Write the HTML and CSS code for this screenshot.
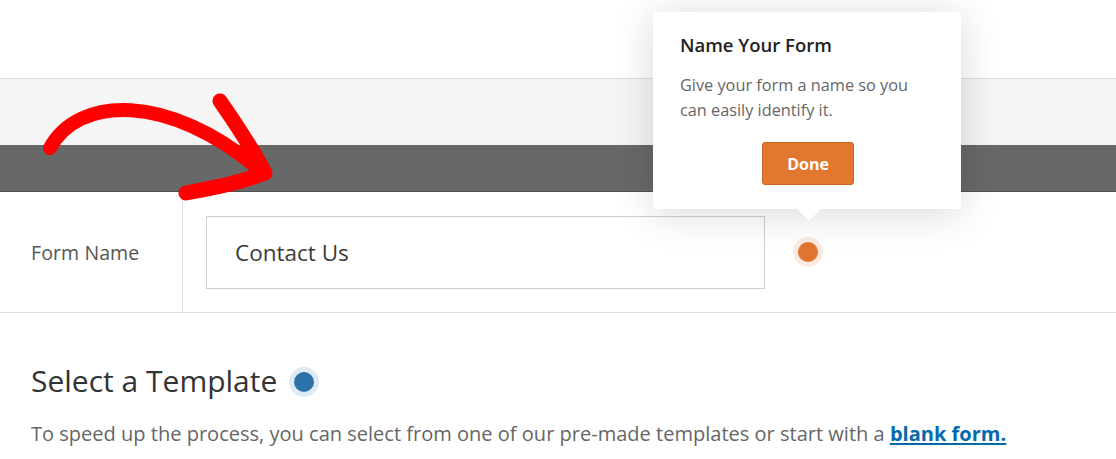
FILE: index.html
```html
<!DOCTYPE html>
<html>
<head>
<meta charset="utf-8">
<link rel="stylesheet" href="styles.css">
</head>
<body>
<div class="page">
  <div class="topbar"></div>
  <div class="toolbar"></div>
  <div class="darkbar"></div>
  <div class="name-row">
    <div class="name-label">Form Name</div>
    <div class="name-field">
      <div class="name-input">Contact Us</div>
      <span class="dot dot-orange"></span>
    </div>
  </div>
  <div class="templates">
    <h2 class="templates-title">Select a Template <span class="dot dot-blue"></span></h2>
    <p class="templates-text">To speed up the process, you can select from one of our pre-made templates or start with a <a class="blank-link" href="#">blank form.</a></p>
  </div>

  <svg class="arrow" width="300" height="220" viewBox="0 0 300 220">
    <path d="M50,148 C78,96 168,92 260,170" fill="none" stroke="#ff0000" stroke-width="14" stroke-linecap="round"/>
    <path d="M220,101 C236,124 252,148 265,173 C236,184 212,188 186,193" fill="none" stroke="#ff0000" stroke-width="15" stroke-linecap="round" stroke-linejoin="round"/>
  </svg>

  <div class="tooltip">
    <div class="tooltip-title">Name Your Form</div>
    <div class="tooltip-text">Give your form a name so you can easily identify it.</div>
    <div class="tooltip-actions"><button class="done-btn">Done</button></div>
  </div>
</div>
</body>
</html>
```

FILE: styles.css
```css
html, body {
  margin: 0;
  padding: 0;
  background: #fff;
}
.page {
  position: relative;
  width: 1116px;
  height: 459px;
  overflow: hidden;
  font-family: "Open Sans", "Noto Sans", sans-serif;
}
.topbar {
  height: 78px;
  border-bottom: 1px solid #dddddd;
}
.toolbar {
  height: 66px;
  background: #f5f5f5;
}
.darkbar {
  height: 46px;
  background: #686868;
  border-bottom: 1px solid #505050;
}
.name-row {
  display: flex;
  height: 120px;
  border-bottom: 1px solid #dddddd;
}
.name-label {
  width: 151px;
  padding-left: 31px;
  border-right: 1px solid #dddddd;
  display: flex;
  align-items: center;
  font-size: 19.5px;
  color: #555;
  letter-spacing: 0.1px;
}
.name-field {
  display: flex;
  align-items: center;
  padding-left: 23px;
}
.name-input {
  box-sizing: border-box;
  width: 559px;
  height: 73px;
  border: 1px solid #cfcfcf;
  padding-left: 28px;
  display: flex;
  align-items: center;
  font-size: 22.5px;
  color: #3a3a3a;
}
.dot {
  display: inline-block;
  width: 20px;
  height: 20px;
  border-radius: 50%;
}
.dot-orange {
  margin-left: 33px;
  background: #df7530;
  box-shadow: 0 0 0 5px rgba(223, 117, 48, 0.15);
}
.dot-blue {
  background: #2c72a6;
  box-shadow: 0 0 0 5px rgba(44, 114, 166, 0.15);
  vertical-align: 0px;
  margin-left: 9px;
}
.templates {
  padding: 0 31px;
}
.templates-title {
  margin: 48px 0 0;
  font-size: 30px;
  font-weight: 400;
  color: #333;
  line-height: 40px;
}
.templates-text {
  margin: 19px 0 0;
  font-size: 20.05px;
  color: #666;
  line-height: 28px;
  white-space: nowrap;
}
.blank-link {
  color: #036aab;
  font-weight: 700;
  text-decoration: underline;
}
.arrow {
  position: absolute;
  left: 0;
  top: 0;
}
.tooltip {
  position: absolute;
  left: 653px;
  top: 12px;
  width: 308px;
  height: 197px;
  box-sizing: border-box;
  padding: 20px 27px 0;
  background: #fff;
  border-radius: 4px;
  box-shadow: 0 4px 40px rgba(0, 0, 0, 0.16);
}
.tooltip::after {
  content: "";
  position: absolute;
  left: 144px;
  bottom: -12px;
  border-left: 12px solid transparent;
  border-right: 12px solid transparent;
  border-top: 12px solid #fff;
}
.tooltip-title {
  font-size: 18.5px;
  font-weight: 600;
  color: #222;
  line-height: 26px;
}
.tooltip-text {
  margin-top: 15px;
  font-size: 16.3px;
  color: #666;
  line-height: 25px;
  width: 240px;
}
.tooltip-actions {
  display: flex;
  justify-content: center;
  margin-top: 19px;
}
.done-btn {
  width: 92px;
  height: 43px;
  background: #e27730;
  border: 1px solid #cd6622;
  border-radius: 3px;
  color: #fff;
  font-family: "Open Sans", "Noto Sans", sans-serif;
  font-size: 16px;
  font-weight: 700;
  margin-left: 2px;
}
```
